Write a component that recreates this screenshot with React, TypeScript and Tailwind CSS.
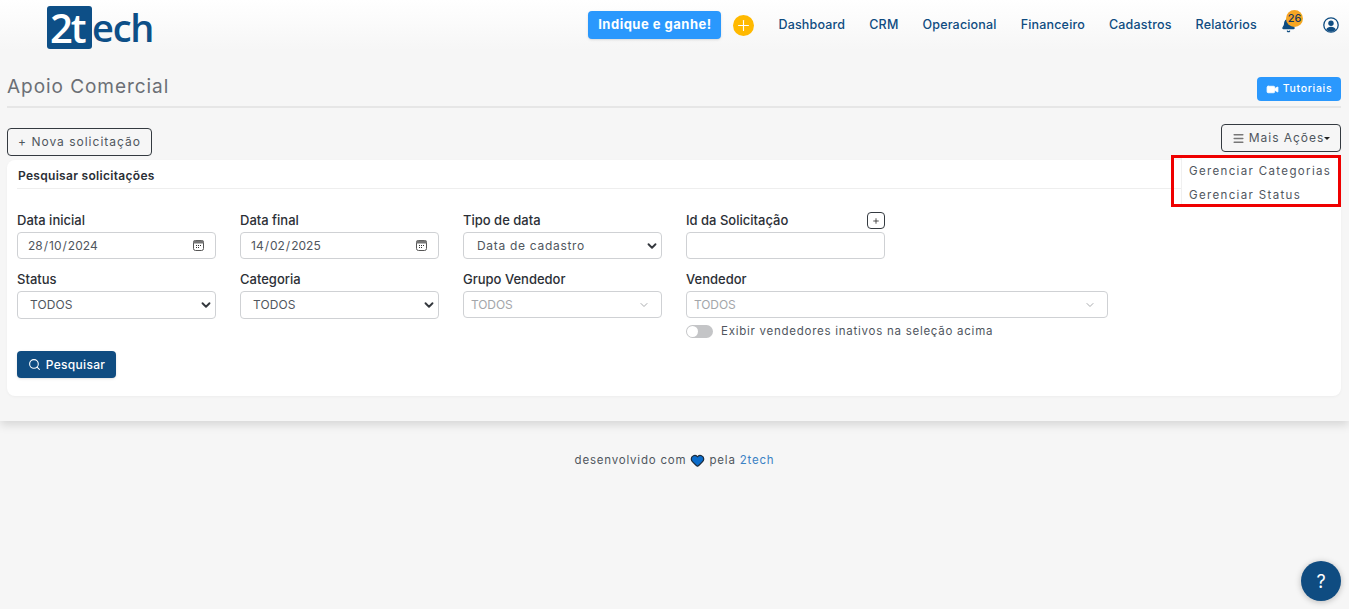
import React from "react";
import { Search, Video, Menu, ChevronDown, Plus, Bell, Heart } from "lucide-react";

const label = "block text-[13px] leading-[18px] font-medium text-[#2b2f36] mb-[3px]";
const field = "h-[27px] rounded-[4px] border border-[#cfd1d4] bg-white flex items-center text-[12px] text-[#50565e]";

function Calendar() {
  return (
    <svg width="11" height="11" viewBox="0 0 11 11" className="shrink-0">
      <rect x="0.5" y="0.5" width="10" height="10" rx="2" fill="#fff" stroke="#555" />
      <rect x="0.5" y="0.5" width="10" height="3" fill="#777" />
      <path d="M3 5.5h1M5 5.5h1M7 5.5h1M3 7.5h1M5 7.5h1" stroke="#333" />
    </svg>
  );
}

function UserCircle() {
  return (
    <svg width="16" height="16" viewBox="0 0 16 16" className="ml-[27px] shrink-0 text-[#0f4c81]">
      <circle cx="8" cy="8" r="7.2" fill="none" stroke="currentColor" strokeWidth="1.3" />
      <circle cx="8" cy="6.2" r="2.7" fill="currentColor" />
      <path d="M3.2 12.6C4 10.6 5.8 9.8 8 9.8s4 .8 4.8 2.8C11.6 14 9.9 14.7 8 14.7s-3.6-.7-4.8-2.1z" fill="currentColor" />
    </svg>
  );
}

function DateField({ title, d, m, y }: { title: string; d: string; m: string; y: string }) {
  return (
    <div>
      <span className={label}>{title}</span>
      <div className={`${field} pl-[10px] pr-[11px] justify-between`}>
        <span className="flex gap-[1px]">
          <span>{d}</span><span>/</span><span>{m}</span><span>/</span><span>{y}</span>
        </span>
        <Calendar />
      </div>
    </div>
  );
}

function SelectField({ title, value, tall = false, wide = false }: { title: string; value: string; tall?: boolean; wide?: boolean }) {
  return (
    <div>
      <span className={label}>{title}</span>
      <div className={`${field} ${tall ? "h-[28px]" : ""} ${wide ? "pl-[13px] tracking-[0.7px]" : "pl-[12px] tracking-[0.1px]"} pr-[2px] justify-between`}>
        <span>{value}</span>
        <ChevronDown size={14} strokeWidth={3.2} className="text-[#33373d]" />
      </div>
    </div>
  );
}

function GreyField({ title, className = "" }: { title: string; className?: string }) {
  return (
    <div className={className}>
      <span className={label}>{title}</span>
      <div className={`${field} pl-[7px] pr-[11px] justify-between text-[#a3a6aa] text-[11.5px] tracking-[-0.1px]`}>
        <span>TODOS</span>
        <ChevronDown size={12} className="text-[#a9abae]" />
      </div>
    </div>
  );
}

export default function App() {
  return (
    <div
      className="relative min-h-[609px] overflow-hidden bg-[#f6f6f6] text-[#50565e]"
      style={{ fontFamily: "Inter, 'Noto Sans', sans-serif" }}
    >
      <div className="relative bg-[#f6f6f6] pb-[25px] shadow-[0_4px_9px_rgba(0,0,0,0.13)]">
        <header className="h-[50px] bg-gradient-to-b from-white to-[#f6f6f6] flex items-center pl-[47px] pr-[10px]">
          <div className="flex items-start h-[44px]" style={{ fontFamily: "'Open Sans', sans-serif" }}>
            <div className="w-[45px] h-[43px] mt-[3px] rounded-[3px] bg-[#0d4f87] text-white text-[40px] leading-[43px] font-semibold tracking-[-2px] pl-[3px]">
              2t
            </div>
            <span className="text-[#0d4f87] text-[38px] leading-[42px] mt-[3px] tracking-[-1.2px] font-semibold">ech</span>
          </div>
          <div className="ml-auto flex items-center">
            <button className="w-[133px] h-[28px] rounded-[4px] bg-[#2a98fd] text-white text-[13px] font-bold tracking-[0.5px] shadow-sm">
              Indique e ganhe!
            </button>
            <span className="ml-[12px] w-[21px] h-[21px] rounded-full bg-[#ffb900] flex items-center justify-center text-white">
              <Plus size={17} strokeWidth={1.6} />
            </span>
            <nav className="ml-[24px] flex items-center gap-[24px] text-[12.5px] tracking-[0.18px] font-medium text-[#0f4c81]">
              <a>Dashboard</a>
              <a>CRM</a>
              <a>Operacional</a>
              <a>Financeiro</a>
              <a>Cadastros</a>
              <a>Relatórios</a>
            </nav>
            <span className="relative ml-[24px] text-[#0f4c81]">
              <Bell size={15} fill="currentColor" className="block" />
              <span className="absolute -top-[8px] left-[5px] w-[17px] h-[17px] rounded-full bg-[#f5a623] text-[#17365c] text-[11px] font-medium flex items-center justify-center">
                26
              </span>
            </span>
            <UserCircle />
          </div>
        </header>

        <main className="ml-[7px] mr-[8px] relative">
          <div className="h-[58px] border-b-2 border-[#e6e6e6] flex items-start justify-between">
            <h1 className="mt-[24px] text-[19px] leading-[26px] tracking-[0.95px] text-[#6b6f75]">Apoio Comercial</h1>
            <button className="mt-[27px] w-[84px] h-[24px] rounded-[4px] bg-[#2a98fd] text-white text-[10.5px] font-medium tracking-[0.7px] flex items-center justify-center gap-[4px]">
              <Video size={13} fill="currentColor" strokeWidth={1.5} />
              Tutoriais
            </button>
          </div>

          <div className="mt-[16px] flex items-start justify-between h-[36px]">
            <button className="mt-[4px] w-[145px] h-[28px] rounded-[4px] border border-[#343a40] text-[12px] tracking-[1px] text-[#50565e]">
              + Nova solicitação
            </button>
            <button className="w-[120px] h-[28px] rounded-[4px] border border-[#343a40] text-[12px] tracking-[0.95px] text-[#50565e] flex items-center justify-center gap-[4px]">
              <Menu size={13} strokeWidth={2.6} className="text-[#777]" />
              Mais Ações
              <span className="-ml-[4px] w-0 h-0 border-x-[3px] border-x-transparent border-t-[3px] border-t-[#222]" />
            </button>
          </div>

          <section className="rounded-[8px] bg-white h-[236px] px-[10px] shadow-[0_1px_3px_rgba(0,0,0,0.04)]">
            <div className="h-[29px] border-b border-[#eeeeee] pl-px pt-[3px] flex items-center text-[12px] font-semibold tracking-[0.3px] text-[#2b2f36]">
              Pesquisar solicitações
            </div>
            <div className="mt-[22px] grid grid-cols-[199px_199px_199px_199px_199px] gap-x-[24px] gap-y-[11px]">
              <DateField title="Data inicial" d="28" m="10" y="2024" />
              <DateField title="Data final" d="14" m="02" y="2025" />
              <SelectField title="Tipo de data" value="Data de cadastro" wide />
              <div className="relative">
                <span className={label}>Id da Solicitação</span>
                <div className={field} />
                <button className="absolute right-0 top-[1px] w-[18px] h-[17px] rounded-[4px] border border-[#343a40] bg-white flex items-center justify-center">
                  <Plus size={8} strokeWidth={2.5} className="text-[#333]" />
                </button>
              </div>
              <div />
              <SelectField title="Status" value="TODOS" tall />
              <SelectField title="Categoria" value="TODOS" tall />
              <GreyField title="Grupo Vendedor" />
              <div className="col-span-2 w-[422px]">
                <GreyField title="Vendedor" />
                <div className="mt-[5px] flex items-center gap-[8px] text-[11.5px] tracking-[0.74px]">
                  <span className="w-[27px] h-[13px] rounded-full bg-[#c4c5c7] relative">
                    <span className="absolute left-px top-px w-[11px] h-[11px] rounded-full bg-white" />
                  </span>
                  Exibir vendedores inativos na seleção acima
                </div>
              </div>
            </div>
            <button className="mt-[11px] w-[99px] h-[27px] rounded-[4px] bg-[#0f4c81] text-white text-[12px] font-medium tracking-[0.3px] flex items-center justify-center gap-[5px] shadow-sm">
              <Search size={13} />
              Pesquisar
            </button>
          </section>

          <div className="absolute right-0 top-[105px] w-[170px] h-[52px] border-[3px] border-[#ef0000] pointer-events-none">
            <div className="ml-[7px] h-full bg-white border-l border-[#f0f0f0] pl-[7px] pt-[1px] text-[11.5px] leading-[24px] tracking-[1.35px] text-[#50565e] pointer-events-auto">
              <div>Gerenciar Categorias</div>
              <div>Gerenciar Status</div>
            </div>
          </div>
        </main>
      </div>

      <footer className="mt-[31px] flex items-center justify-center gap-[4px] text-[11.5px] tracking-[0.8px] text-[#50565e]">
        <span>desenvolvido com</span>
        <Heart size={15} fill="#0a6ccb" className="text-[#1c2b3c]" />
        <span>pela <span className="text-[#3b82c4]">2tech</span></span>
      </footer>

      <button className="absolute right-[8px] bottom-[8px] w-[40px] h-[40px] rounded-full bg-[#0f4c81] text-white text-[18px] shadow-[0_1px_6px_rgba(0,0,0,0.25)]">
        ?
      </button>
    </div>
  );
}
